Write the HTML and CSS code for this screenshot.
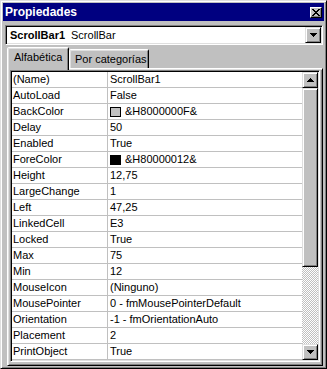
FILE: index.html
```html
<!DOCTYPE html>
<html lang="es">
<head>
  <meta charset="UTF-8" />
  <title>Propiedades</title>
  <link rel="stylesheet" href="styles.css">
</head>
<body>

  <div class="window">

    <!-- Title bar -->
    <div class="titlebar">
      <span class="title">Propiedades</span>
      <span class="close">
        <svg width="8" height="7" viewBox="0 0 8 7"><path d="M0 0h2v1h-2z M6 0h2v1h-2z M1 1h2v1h-2z M5 1h2v1h-2z M2 2h4v1h-4z M3 3h2v1h-2z M2 4h4v1h-4z M1 5h2v1h-2z M5 5h2v1h-2z M0 6h2v1h-2z M6 6h2v1h-2z" fill="#000"/></svg>
      </span>
    </div>

    <!-- Object combo -->
    <div class="combo">
      <span class="combo-text"><b>ScrollBar1</b><span class="combo-type">ScrollBar</span></span>
      <span class="btn95 combo-btn">
        <svg width="7" height="4" viewBox="0 0 7 4"><path d="M0 0h7v1h-7z M1 1h5v1h-5z M2 2h3v1h-3z M3 3h1v1h-1z" fill="#000"/></svg>
      </span>
    </div>

    <!-- Tabs -->
    <div class="tabs">
      <div class="tab active">Alfabética</div>
      <div class="tab">Por categorías</div>
    </div>

    <div class="panel">
      <div class="grid">
        <div class="rows">
          <div class="row"><div class="name">(Name)</div><div class="value">ScrollBar1</div></div>
          <div class="row"><div class="name">AutoLoad</div><div class="value">False</div></div>
          <div class="row"><div class="name">BackColor</div><div class="value"><span class="swatch grey"></span>&amp;H8000000F&amp;</div></div>
          <div class="row"><div class="name">Delay</div><div class="value">50</div></div>
          <div class="row"><div class="name">Enabled</div><div class="value">True</div></div>
          <div class="row"><div class="name">ForeColor</div><div class="value"><span class="swatch black"></span>&amp;H80000012&amp;</div></div>
          <div class="row"><div class="name">Height</div><div class="value">12,75</div></div>
          <div class="row"><div class="name">LargeChange</div><div class="value">1</div></div>
          <div class="row"><div class="name">Left</div><div class="value">47,25</div></div>
          <div class="row"><div class="name">LinkedCell</div><div class="value">E3</div></div>
          <div class="row"><div class="name">Locked</div><div class="value">True</div></div>
          <div class="row"><div class="name">Max</div><div class="value">75</div></div>
          <div class="row"><div class="name">Min</div><div class="value">12</div></div>
          <div class="row"><div class="name">MouseIcon</div><div class="value">(Ninguno)</div></div>
          <div class="row"><div class="name">MousePointer</div><div class="value">0 - fmMousePointerDefault</div></div>
          <div class="row"><div class="name">Orientation</div><div class="value">-1 - fmOrientationAuto</div></div>
          <div class="row"><div class="name">Placement</div><div class="value">2</div></div>
          <div class="row"><div class="name">PrintObject</div><div class="value">True</div></div>
        </div>

        <!-- Vertical scrollbar -->
        <div class="scrollbar">
          <span class="btn95 sb-btn">
            <svg width="7" height="4" viewBox="0 0 7 4"><path d="M3 0h1v1h-1z M2 1h3v1h-3z M1 2h5v1h-5z M0 3h7v1h-7z" fill="#000"/></svg>
          </span>
          <div class="btn95 sb-thumb"></div>
          <div class="sb-track"></div>
          <span class="btn95 sb-btn">
            <svg width="7" height="4" viewBox="0 0 7 4"><path d="M0 0h7v1h-7z M1 1h5v1h-5z M2 2h3v1h-3z M3 3h1v1h-1z" fill="#000"/></svg>
          </span>
        </div>
      </div>
    </div>

  </div>

</body>
</html>
```

FILE: styles.css
```css
body {
  margin: 0;
  background-color: #c0c0c0;
  font-family: "Liberation Sans", Arial, sans-serif;
  font-size: 11px;
  color: black;
}

.window {
  width: 327px;
  height: 369px;
  box-sizing: border-box;
  display: flex;
  flex-direction: column;
  background-color: #c0c0c0;
  border: 1px solid;
  border-color: #dfdfdf #000 #000 #dfdfdf;
  box-shadow: inset 1px 1px #fff, inset -1px -1px #808080;
  padding: 2px;
}

/* raised 3d button */
.btn95 {
  box-sizing: border-box;
  display: flex;
  align-items: center;
  justify-content: center;
  background-color: #c0c0c0;
  border: 1px solid;
  border-color: #dfdfdf #000 #000 #dfdfdf;
  box-shadow: inset 1px 1px #fff, inset -1px -1px #808080;
}

.titlebar {
  height: 18px;
  display: flex;
  align-items: center;
  justify-content: space-between;
  background-color: #000080;
  padding: 0 2px;
}

.title {
  color: white;
  font-weight: bold;
  font-size: 12px;
}

.close {
  box-sizing: border-box;
  width: 12px;
  height: 11px;
  display: flex;
  align-items: center;
  justify-content: center;
  background-color: #c0c0c0;
  border: 1px solid;
  border-color: #fff #000 #000 #fff;
  box-shadow: inset -1px -1px #808080;
}

.combo {
  height: 20px;
  box-sizing: border-box;
  margin: 4px 1px 0 2px;
  display: flex;
  align-items: center;
  background-color: white;
  border: 1px solid;
  border-color: #808080 #fff #fff #808080;
  box-shadow: inset 1px 1px #000, inset -1px -1px #dfdfdf;
  padding: 1px;
}

.combo-text {
  flex: 1;
  padding-left: 3px;
  line-height: 16px;
}

.combo-type {
  margin-left: 6px;
}

.combo-btn {
  width: 16px;
  height: 16px;
}

.tabs {
  height: 21px;
  margin: 2px 0 0 4px;
  display: flex;
  align-items: flex-end;
}

.tab {
  box-sizing: border-box;
  width: 80px;
  height: 19px;
  padding: 3px 0 0 5px;
  background-color: #c0c0c0;
  border: 1px solid;
  border-bottom: none;
  border-color: #fff #000 transparent #fff;
  border-radius: 2px 2px 0 0;
  box-shadow: inset 1px 1px #dfdfdf, inset -1px 0 #808080;
}

.tab.active {
  position: relative;
  z-index: 1;
  width: 62px;
  height: 23px;
  margin-bottom: -2px;
  padding: 3px 0 0 6px;
}

.panel {
  flex: 1;
  margin: 0 1px 0 4px;
  border: 1px solid;
  border-color: #fff #000 #000 #fff;
  box-shadow: inset 1px 1px #dfdfdf, inset -1px -1px #808080;
  padding: 1px 2px 2px 2px;
}

.grid {
  display: flex;
  background-color: white;
  border: 1px solid;
  border-color: #808080 #fff #fff #808080;
  box-shadow: inset 1px 1px #000, inset -1px -1px #dfdfdf;
  padding: 1px;
}

.rows {
  flex: 1;
}

.row {
  height: 16px;
  box-sizing: border-box;
  display: flex;
  border-bottom: 1px solid #c0c0c0;
  line-height: 15px;
  white-space: nowrap;
}

.name {
  width: 96px;
  box-sizing: border-box;
  padding-left: 1px;
  border-right: 1px solid #c0c0c0;
}

.value {
  flex: 1;
  display: flex;
  align-items: center;
  padding-left: 2px;
  overflow: hidden;
}

.swatch {
  width: 11px;
  height: 10px;
  box-sizing: border-box;
  border: 1px solid black;
  margin-right: 4px;
}

.swatch.grey {
  background-color: #c0c0c0;
}

.swatch.black {
  background-color: black;
}

.scrollbar {
  width: 16px;
  display: flex;
  flex-direction: column;
}

.sb-btn {
  height: 16px;
}

.sb-thumb {
  height: 179px;
}

.sb-track {
  flex: 1;
  background: repeating-conic-gradient(#fff 0 25%, #c0c0c0 0 50%) 0 0 / 2px 2px;
}
```
